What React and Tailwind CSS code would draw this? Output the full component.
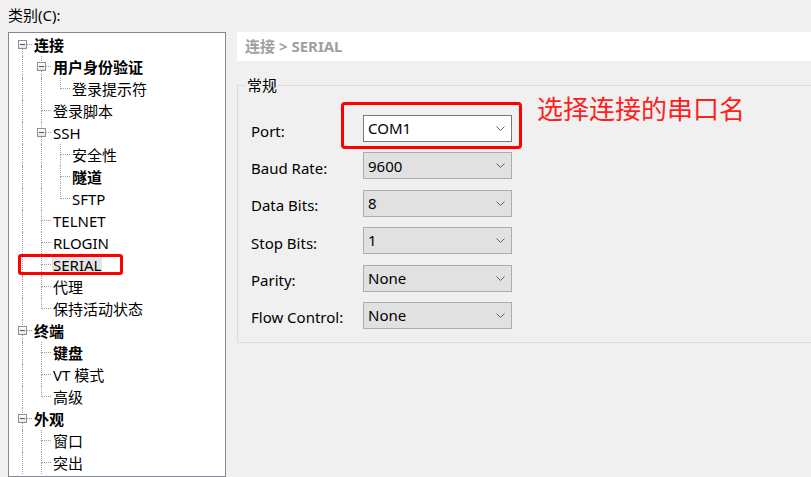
import React from "react";
import clsx from "clsx";

const TREE = [
  {
    label: "连接",
    bold: true,
    children: [
      { label: "用户身份验证", bold: true, children: [{ label: "登录提示符" }] },
      { label: "登录脚本" },
      {
        label: "SSH",
        children: [{ label: "安全性" }, { label: "隧道", bold: true }, { label: "SFTP" }],
      },
      { label: "TELNET" },
      { label: "RLOGIN" },
      { label: "SERIAL", selected: true },
      { label: "代理" },
      { label: "保持活动状态" },
    ],
  },
  {
    label: "终端",
    bold: true,
    children: [{ label: "键盘", bold: true }, { label: "VT 模式" }, { label: "高级" }],
  },
  {
    label: "外观",
    bold: true,
    more: true,
    children: [{ label: "窗口" }, { label: "突出", more: true }],
  },
];

const FIELDS = [
  { label: "Port:", value: "COM1", focus: true },
  { label: "Baud Rate:", value: "9600" },
  { label: "Data Bits:", value: "8" },
  { label: "Stop Bits:", value: "1" },
  { label: "Parity:", value: "None" },
  { label: "Flow Control:", value: "None" },
];

// the list goes on below the window, so some nodes keep their line running
function flatten(nodes, level = 0, rails = [], out = []) {
  nodes.forEach((n, i) => {
    const last = i === nodes.length - 1 && !n.more;
    out.push({ ...n, level, rails, last, first: level === 0 && i === 0 });
    if (n.children) flatten(n.children, level + 1, [...rails, !last], out);
  });
  return out;
}

const dots = "border-dotted border-[#a0a0a0]";

function TreeRow({ row }) {
  return (
    <div className="flex h-[22px] items-center">
      {row.rails.map((on, i) => (
        <div key={i} className="flex h-full w-[19px] shrink-0">
          <div className={clsx("h-full w-[10px]", on && `border-r ${dots}`)} />
        </div>
      ))}
      <div className="relative grid h-full w-[19px] shrink-0 grid-cols-[10px_9px] grid-rows-[11px_11px]">
        <div className={clsx(!row.first && `border-r ${dots}`)} />
        <div className={`border-b ${dots}`} />
        <div className={clsx(!row.last && `border-r ${dots}`)} />
        <div />
        {row.children && (
          <div className="absolute left-[5px] top-[6px] flex h-[9px] w-[9px] items-center justify-center border border-[#919191] bg-gradient-to-b from-white to-[#e4e4e4]">
            <div className="h-[1px] w-[5px] bg-[#3b5998]" />
          </div>
        )}
      </div>
      <span
        className={clsx(
          "ml-[1px] whitespace-nowrap px-[1px] text-[15px] leading-[20px] text-black",
          row.bold && "font-bold",
          row.selected && "bg-[#e5e5e5]"
        )}
      >
        {row.label}
      </span>
    </div>
  );
}

function Combo({ value, focus }) {
  return (
    <div
      className={clsx(
        "flex h-[27px] w-[149px] items-center justify-between border pl-[4px] pr-[6px] text-[15px]",
        focus ? "border-[#7a7a7a] bg-white" : "border-[#adadad] bg-[#e1e1e1]"
      )}
    >
      <span>{value}</span>
      <svg width="9" height="5" viewBox="0 0 9 5">
        <path d="M0.5 0.5 L4.5 4.5 L8.5 0.5" fill="none" stroke="#606060" strokeWidth="1" />
      </svg>
    </div>
  );
}

export default function App() {
  const rows = flatten(TREE);

  return (
    <div className="relative flex h-[477px] w-[811px] overflow-hidden bg-[#f0f0f0] font-['Noto_Sans','Noto_Sans_CJK_SC',sans-serif] text-black">
      <div className="flex shrink-0 flex-col pl-[8px]">
        <div className="pt-[5px] text-[15px] leading-[20px]">类别(C):</div>
        <div className="mt-[7px] h-[460px] w-[218px] border border-[#828790] bg-white pl-[4px] pt-[1px]">
          {rows.map((r, i) => (
            <TreeRow key={i} row={r} />
          ))}
        </div>
      </div>

      <div className="ml-[11px] mt-[32px] flex w-[590px] shrink-0 flex-col">
        <div className="flex h-[29px] items-center bg-white px-[8px] text-[15px] font-bold text-[#a0a0a0]">
          连接 &gt; SERIAL
        </div>
        <fieldset className="mt-[14px] border border-[#dcdcdc] pb-[13px] pt-[20px]">
          <legend className="ml-[8px] px-[1px] text-[15px] leading-[20px]">常规</legend>
          <div className="flex flex-col gap-[10.4px] pl-[13px]">
            {FIELDS.map((f) => (
              <div key={f.label} className="flex h-[27px] items-center">
                <div className="w-[112px] pt-[4px] text-[15px] leading-[20px]">{f.label}</div>
                <Combo value={f.value} focus={f.focus} />
              </div>
            ))}
          </div>
        </fieldset>
      </div>

      <div className="absolute left-[341px] top-[102px] h-[47px] w-[181px] rounded-[4px] border-[3px] border-[#ff0000]" />
      <div className="absolute left-[537px] top-[93px] whitespace-nowrap text-[26px] leading-[32px] text-[#ff1f1f]">
        选择连接的串口名
      </div>
      <div className="absolute left-[18px] top-[254px] h-[21px] w-[105px] rounded-[3px] border-[3px] border-[#ff0000]" />
    </div>
  );
}
